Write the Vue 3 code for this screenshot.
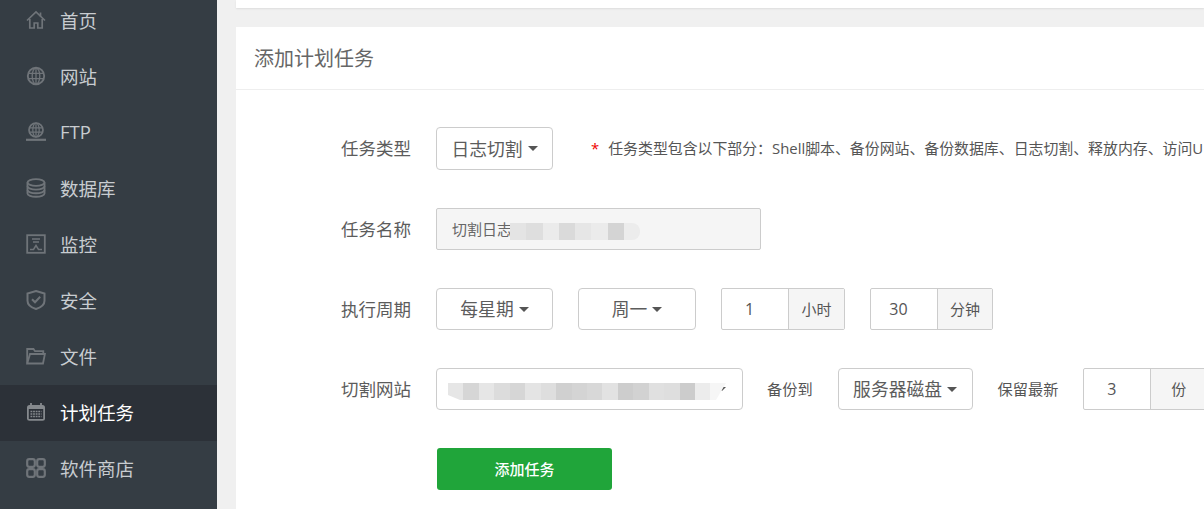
<script setup>
const menu = [
  { name: '首页', icon: 'home' },
  { name: '网站', icon: 'globe' },
  { name: 'FTP', icon: 'ftp' },
  { name: '数据库', icon: 'db' },
  { name: '监控', icon: 'monitor' },
  { name: '安全', icon: 'shield' },
  { name: '文件', icon: 'folder' },
  { name: '计划任务', icon: 'calendar', active: true },
  { name: '软件商店', icon: 'grid' }
]
const nameBlur = ['#e4e4e4', '#dedede', '#ebebeb', '#dadada', '#e6e6e6', '#ebebeb', '#d4d4d4', '#ececec']
const siteBlur = ['#e6e6e6', '#d6d6d6', '#e6e6e6', '#dcdcdc', '#d6d6d6', '#e4e4e4', '#dedede', '#d0d0d0', '#d4d4d4', '#d8d8d8', '#e2e2e2', '#cdcdcd', '#d2d2d2', '#e0e0e0', '#dedede', '#cccccc', '#ececec', '#f6f6f6']
</script>

<template>
  <div class="page">
    <aside class="sidebar">
      <ul class="menu">
        <li v-for="item in menu" :key="item.name" class="menu-item" :class="{ active: item.active }">
          <svg class="menu-icon" viewBox="0 0 20 20" fill="none" stroke="currentColor" stroke-width="1.7">
            <template v-if="item.icon === 'home'">
              <path d="M1 10.500 10 2l9 8.500" />
              <path d="M3.800 9v9h4.400v-5h3.600v5h4.400V9" />
              <path d="M14.500 2.500v4" />
            </template>
            <template v-else-if="item.icon === 'globe'">
              <circle cx="10" cy="10" r="8.200" stroke-width="1.900" />
              <ellipse cx="10" cy="10" rx="3.800" ry="8" stroke-width="1.300" />
              <path d="M2 7.300h16M2 12.700h16M10 2v16" stroke-width="1.300" />
            </template>
            <template v-else-if="item.icon === 'ftp'">
              <circle cx="10" cy="8" r="7" stroke-width="1.700" />
              <ellipse cx="10" cy="8" rx="3.200" ry="7" stroke-width="1.200" />
              <path d="M3.500 5.800h13M3.500 10.200h13M10 1v14" stroke-width="1.200" />
              <path d="M0 17.800h20" stroke-width="2.200" />
            </template>
            <template v-else-if="item.icon === 'db'">
              <ellipse cx="10" cy="4.500" rx="8.500" ry="3.400" stroke-width="1.900" />
              <path d="M1.500 4.500v11c0 1.800 3.800 3.300 8.500 3.300s8.500-1.500 8.500-3.300v-11" stroke-width="1.900" />
              <path d="M1.500 8.300c0 1.800 3.800 3.300 8.500 3.300s8.500-1.500 8.500-3.300M1.500 12c0 1.800 3.800 3.300 8.500 3.300s8.500-1.500 8.500-3.300" stroke-width="1.900" />
            </template>
            <template v-else-if="item.icon === 'monitor'">
              <rect x="1.200" y="1.200" width="17.600" height="17.600" stroke-width="1.800" />
              <path d="M6 5h8M7 8h6" stroke-width="1.500" />
              <path d="M4 15.500h3.500l2.500-4 2.500 4H16" stroke-width="1.500" />
            </template>
            <template v-else-if="item.icon === 'shield'">
              <path d="M10 1 18.500 3.500v7.300c0 3.800-3.800 6.800-8.500 8.200-4.700-1.400-8.500-4.400-8.500-8.200V3.500z" stroke-width="2" />
              <path d="M6 9.300l3 3 5.200-5.600" stroke-width="2" />
            </template>
            <template v-else-if="item.icon === 'folder'">
              <path d="M1.200 17.500V3h6.300l1.500 2.200h8.300V8" stroke-width="1.800" />
              <path d="M1.200 17.500h15.800l1.900-9.500H4z" stroke-width="1.800" />
            </template>
            <template v-else-if="item.icon === 'calendar'">
              <rect x="1" y="3" width="18" height="15.800" rx="2.500" fill="currentColor" stroke="none" />
              <rect x="2.800" y="7" width="14.400" height="10" fill="#2c3138" stroke="none" />
              <path d="M5 1v3M15 1v3" stroke-width="1.800" />
              <path d="M4.500 9.500h11M4.500 12h11M4.500 14.500h11" stroke-width="1.500" stroke-dasharray="1.800 .8" />
            </template>
            <template v-else>
              <rect x="1.200" y="1.200" width="7.600" height="7.600" rx="2" stroke-width="2.200" />
              <rect x="11.200" y="1.200" width="7.600" height="7.600" rx="2" stroke-width="2.200" />
              <rect x="1.200" y="11.200" width="7.600" height="7.600" rx="2" stroke-width="2.200" />
              <rect x="11.200" y="11.200" width="7.600" height="7.600" rx="2" stroke-width="2.200" />
            </template>
          </svg>
          <span>{{ item.name }}</span>
        </li>
      </ul>
    </aside>

    <main class="main">
      <div class="card-top"></div>
      <section class="card">
        <h2 class="card-title">添加计划任务</h2>
        <div class="form">
          <div class="row row-first">
            <label class="label">任务类型</label>
            <div class="select w-117">日志切割<i class="caret"></i></div>
            <span class="hint"><b class="star">*</b>任务类型包含以下部分：Shell脚本、备份网站、备份数据库、日志切割、释放内存、访问URL</span>
          </div>
          <div class="row">
            <label class="label">任务名称</label>
            <div class="input-disabled">
              切割日志
              <div class="blur blur-name">
                <i v-for="(c, i) in nameBlur" :key="i" :style="{ background: c }"></i>
              </div>
            </div>
          </div>
          <div class="row">
            <label class="label">执行周期</label>
            <div class="select w-117">每星期<i class="caret"></i></div>
            <div class="select w-118 ml-25">周一<i class="caret"></i></div>
            <div class="group ml-25">
              <span class="num">1</span><span class="addon a-56">小时</span>
            </div>
            <div class="group ml-25">
              <span class="num">30</span><span class="addon a-55">分钟</span>
            </div>
          </div>
          <div class="row">
            <label class="label">切割网站</label>
            <div class="select w-307">
              <i class="caret caret-site"></i>
              <div class="blur blur-site">
                <i v-for="(c, i) in siteBlur" :key="i" :style="{ background: c }"></i>
              </div>
            </div>
            <span class="inline-label ml-24">备份到</span>
            <div class="select w-135 ml-25">服务器磁盘<i class="caret"></i></div>
            <span class="inline-label ml-25">保留最新</span>
            <div class="group ml-25">
              <span class="num">3</span><span class="addon a-wide">份</span>
            </div>
          </div>
          <div class="row">
            <button class="submit" type="button">添加任务</button>
          </div>
        </div>
      </section>
    </main>
  </div>
</template>

<style>
html, body { margin: 0; overflow: hidden; }
</style>

<style scoped>
.page {
  display: flex;
  width: 1204px;
  height: 509px;
  overflow: hidden;
  background: #f0f0f0;
  font-family: "Open Sans", "Noto Sans CJK SC", sans-serif;
}
.sidebar {
  flex: 0 0 217px;
  background: #353d44;
  overflow: hidden;
}
.menu {
  list-style: none;
  margin: -7px 0 0;
  padding: 0;
}
.menu-item {
  display: flex;
  align-items: center;
  box-sizing: border-box;
  height: 56px;
  padding: 0 0 3px 26px;
  font-size: 18.500px;
  color: #c8ccd0;
}
.menu-item.active {
  background: #2c3138;
  color: #fff;
}
.menu-icon {
  flex: none;
  width: 20px;
  height: 20px;
  margin-right: 14px;
  color: #6f7479;
}
.menu-item.active .menu-icon { color: #85898d; }
.main {
  flex: 1;
  min-width: 0;
  padding-left: 19px;
  overflow: hidden;
}
.card-top {
  height: 8px;
  background: #fff;
  box-shadow: 0 1px 2px rgba(0, 0, 0, 0.08);
}
.card {
  margin-top: 19px;
  width: 1200px;
  height: 600px;
  background: #fff;
}
.card-title {
  margin: 0;
  height: 63px;
  box-sizing: border-box;
  padding-left: 18px;
  line-height: 64px;
  font-size: 20px;
  font-weight: 400;
  color: #666;
  border-bottom: 1px solid #eee;
}
.form {
  display: flex;
  flex-direction: column;
  gap: 38px;
  padding: 37px 0 0 105px;
}
.row {
  display: flex;
  align-items: center;
  height: 42px;
  white-space: nowrap;
}
.row-first { height: 43px; }
.row:last-child { padding-left: 96px; }
.label {
  flex: none;
  width: 95px;
  padding-bottom: 2px;
  font-size: 17.500px;
  color: #5c5c5c;
}
.select {
  flex: none;
  box-sizing: border-box;
  position: relative;
  display: flex;
  align-items: center;
  justify-content: center;
  height: 100%;
  padding-bottom: 2px;
  border: 1px solid #ccc;
  border-radius: 4px;
  background: #fff;
  font-size: 17.800px;
  color: #5c5c5c;
}
.w-117 { width: 117px; }
.w-118 { width: 118px; }
.w-307 { width: 307px; }
.w-135 { width: 135px; }
.ml-24 { margin-left: 24px; }
.ml-25 { margin-left: 25px; }
.caret {
  width: 0;
  height: 0;
  margin: 2px 0 0 5px;
  border-top: 5px solid #555;
  border-left: 5px solid transparent;
  border-right: 5px solid transparent;
}
.caret-site {
  position: absolute;
  right: 16px;
  top: 18px;
  margin: 0;
  border-width: 4px 4px 0;
}
.hint {
  margin-left: 38px;
  padding-bottom: 2px;
  font-size: 14.900px;
  color: #555;
}
.star {
  margin-right: 9px;
  font-weight: 400;
  color: #e00;
}
.input-disabled {
  box-sizing: border-box;
  position: relative;
  display: flex;
  align-items: center;
  width: 325px;
  height: 100%;
  padding: 0 0 2px 15px;
  border: 1px solid #ccc;
  border-radius: 2px;
  background: #f5f5f5;
  font-size: 15px;
  color: #666;
}
.blur {
  position: absolute;
  display: flex;
  overflow: hidden;
}
.blur i { flex: 1; }
.blur-name {
  left: 73px;
  top: 14px;
  width: 130px;
  height: 17px;
  border-radius: 0 8px 8px 0;
}
.blur-site {
  left: 11px;
  top: 14px;
  width: 278px;
  height: 17px;
  clip-path: polygon(0 0, 100% 0, 268px 100%, 12px 100%, 0 70%);
}
.group {
  flex: none;
  display: flex;
  box-sizing: border-box;
  height: 100%;
  border: 1px solid #ccc;
  border-radius: 2px;
  font-size: 16px;
  color: #555;
}
.num {
  display: flex;
  align-items: center;
  justify-content: center;
  width: 66px;
  padding-right: 11px;
  box-sizing: border-box;
}
.addon {
  display: flex;
  align-items: center;
  justify-content: center;
  box-sizing: border-box;
  padding-bottom: 2px;
  border-left: 1px solid #ccc;
  background: #f5f5f5;
  font-size: 15px;
}
.a-56 { width: 56px; }
.a-55 { width: 55px; }
.a-wide { width: 56px; }
.inline-label {
  flex: none;
  padding-bottom: 2px;
  font-size: 15.200px;
  color: #555;
}
.submit {
  width: 175px;
  height: 42px;
  padding: 0 0 2px;
  border: none;
  border-radius: 3px;
  background: #20a53a;
  color: #fff;
  font: 500 15px "Open Sans", "Noto Sans CJK SC", sans-serif;
}
</style>
